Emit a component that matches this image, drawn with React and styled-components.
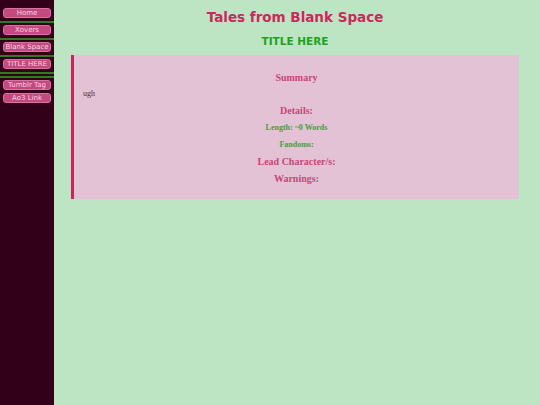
import React from 'react';
import styled, { createGlobalStyle } from 'styled-components';

const GlobalStyle = createGlobalStyle`
  html, body {
    margin: 0;
    padding: 0;
    height: 100%;
  }
  body {
    font-family: 'Liberation Serif', Georgia, serif;
    background: #bde5c4;
  }
  #root {
    height: 100%;
  }
`;

const Page = styled.div`
  display: flex;
  min-height: 100vh;
`;

const Sidebar = styled.nav`
  width: 54px;
  flex-shrink: 0;
  background: #33001a;
  display: flex;
  flex-direction: column;
  padding: 8px 3px 0;
  box-sizing: border-box;
`;

const NavButton = styled.a`
  display: block;
  height: 10px;
  box-sizing: border-box;
  background: #c4497f;
  border: 1px solid #d9709f;
  border-radius: 3px;
  color: #f3d3e3;
  font-family: 'DejaVu Sans', Verdana, sans-serif;
  font-size: 7px;
  line-height: 8px;
  text-align: center;
  white-space: nowrap;
  text-decoration: none;
  margin-bottom: ${({ $gap }) => $gap || 0}px;
`;

// green rule between menu entries; the double one sits before the external links
const Divider = styled.div`
  margin: 3px -3px 2px;
  height: ${({ $double }) => ($double ? '6px' : '2px')};
  box-sizing: border-box;
  border-top: 2px solid #2f7a22;
  border-bottom: ${({ $double }) => ($double ? '2px solid #2f7a22' : 'none')};
`;

const Main = styled.main`
  flex: 1;
  background: #bde5c4;
  padding: 0 21px 0 17px;
`;

const SiteTitle = styled.h1`
  margin: 8px 0 0;
  text-align: center;
  font-family: 'DejaVu Sans', Verdana, sans-serif;
  font-size: 13.5px;
  line-height: 18px;
  color: #c9295d;
`;

const StoryTitle = styled.h2`
  margin: 8px 0 0;
  text-align: center;
  font-family: 'DejaVu Sans', Verdana, sans-serif;
  font-size: 10.5px;
  line-height: 14px;
  color: #22a022;
`;

const Panel = styled.section`
  margin-top: 7px;
  background: #e2c2d4;
  border-left: 3px solid #cc2458;
  padding: 17px 9px 14px;
  text-align: center;
`;

const Heading = styled.h3`
  margin: ${({ $top }) => $top || 0}px 0 0;
  font-family: 'Liberation Serif', Georgia, serif;
  font-size: ${({ $small }) => ($small ? '8px' : '10px')};
  line-height: 12px;
  color: ${({ $green }) => ($green ? '#45a03a' : '#c84678')};
`;

const Body = styled.p`
  margin: 5px 0 0;
  text-align: left;
  font-family: 'Liberation Serif', Georgia, serif;
  font-size: 8px;
  line-height: 10px;
  color: #4a3040;
`;

const App = () => (
  <>
    <GlobalStyle />
    <Page>
      <Sidebar>
        <NavButton href="#">Home</NavButton>
        <Divider />
        <NavButton href="#">Xovers</NavButton>
        <Divider />
        <NavButton href="#">Blank Space</NavButton>
        <Divider />
        <NavButton href="#">TITLE HERE</NavButton>
        <Divider $double />
        <NavButton href="#" $gap={3}>Tumblr Tag</NavButton>
        <NavButton href="#">Ao3 Link</NavButton>
      </Sidebar>
      <Main>
        <SiteTitle>Tales from Blank Space</SiteTitle>
        <StoryTitle>TITLE HERE</StoryTitle>
        <Panel>
          <Heading>Summary</Heading>
          <Body>ugh</Body>
          <Heading $top={6}>Details:</Heading>
          <Heading $green $small $top={5}>Length: ~0 Words</Heading>
          <Heading $green $small $top={5}>Fandoms:</Heading>
          <Heading $top={5}>Lead Character/s:</Heading>
          <Heading $top={5}>Warnings:</Heading>
        </Panel>
      </Main>
    </Page>
  </>
);

export default App;
